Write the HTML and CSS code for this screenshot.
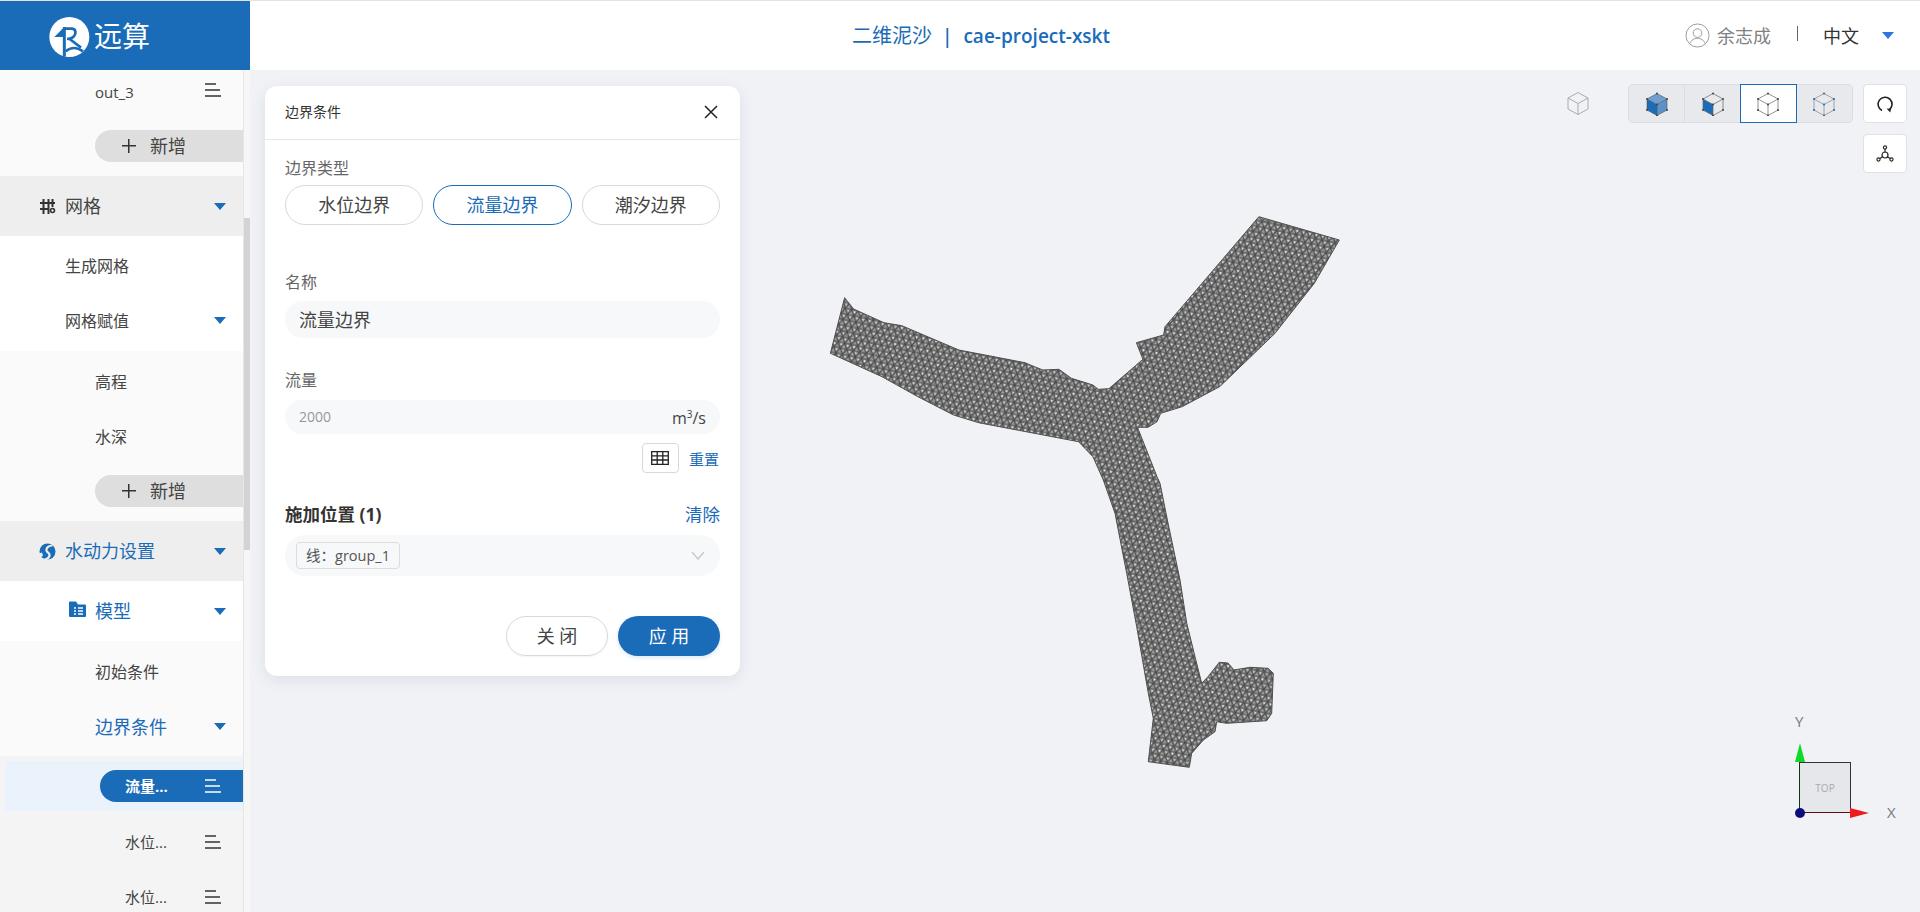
FILE: index.html
```html
<!DOCTYPE html>
<html lang="zh-CN">
<head>
<meta charset="utf-8">
<title>二维泥沙 | cae-project-xskt</title>
<link rel="stylesheet" href="styles.css">
</head>
<body>
<svg class="defs" width="0" height="0" aria-hidden="true">
  <defs>
    <symbol id="lines" viewBox="0 0 16 14"><path d="M0 1h11M0 7h15M0 13h16" stroke="currentColor" stroke-width="1.4" fill="none"/></symbol>
    <symbol id="cube-dots" viewBox="0 0 24 24"><path d="M12 1.500h.01M22 7h.01M22 18h.01M12 23.500h.01M2 18h.01M2 7h.01M12 12.500h.01" stroke="#444" stroke-width="2" stroke-linecap="round"/></symbol>
    <pattern id="mesh" width="6.600" height="11.430" patternUnits="userSpaceOnUse" patternTransform="rotate(12)">
      <rect width="6.600" height="11.430" fill="#a0a0a0"/>
      <path d="M0 0H6.600M0 5.715H6.600M0 11.430H6.600M0 0L3.300 5.715L6.600 0M0 11.430L3.300 5.715L6.600 11.430" stroke="#4c4c4c" stroke-width="1.150" fill="none"/>
      <circle cx="3.300" cy="1.900" r=".85" fill="#f6f7f9"/>
      <circle cx="0" cy="7.600" r=".85" fill="#f0f1f3"/>
      <circle cx="6.600" cy="7.600" r=".85" fill="#f0f1f3"/>
    </pattern>
    <pattern id="mesh-over" width="7.400" height="12.800" patternUnits="userSpaceOnUse" patternTransform="rotate(47)">
      <path d="M0 0H7.400M0 6.400H7.400M0 0L3.700 6.400L7.400 0M0 12.800L3.700 6.400L7.400 12.800" stroke="#444" stroke-width="1" fill="none"/>
    </pattern>
  </defs>
</svg>
<header class="topbar">
  <div class="brand">
    <svg class="brand-mark" viewBox="0 0 150 150" aria-hidden="true">
      <circle cx="73" cy="78" r="60" fill="#fff"/>
      <path d="M28 78L58 48V78z" fill="#1a6bb8"/>
      <path d="M58 48V137" stroke="#1a6bb8" stroke-width="9" fill="none"/>
      <path d="M58 53H82Q93 55 91 68Q86 84 66 84" stroke="#1a6bb8" stroke-width="8" fill="none"/>
      <path d="M74 84L108 110" stroke="#1a6bb8" stroke-width="8" fill="none"/>
      <path d="M62 121Q86 101 114 121" stroke="#1a6bb8" stroke-width="8" fill="none"/>
    </svg>
    <span class="brand-name">远算</span>
  </div>
  <div class="project"><span class="project-type">二维泥沙</span><span class="project-sep">|</span><span class="project-name">cae-project-xskt</span></div>
  <div class="account">
    <svg class="avatar" viewBox="0 0 26 26" aria-hidden="true"><circle cx="13" cy="13" r="12" fill="none" stroke="#999" stroke-width="1"/><circle cx="13" cy="10.5" r="4.5" fill="none" stroke="#999" stroke-width="1"/><path d="M5 21.5c1.500-4 4.500-5.500 8-5.500s6.500 1.500 8 5.500" fill="none" stroke="#999" stroke-width="1"/></svg>
    <span class="user-name">余志成</span>
    <span class="account-sep"></span>
    <span class="lang">中文</span>
    <span class="caret caret-lang"></span>
  </div>
</header>
<div class="workspace">
  <aside class="sidebar">
    <nav class="tree">
      <div class="block block-soft">
        <div class="row row-top row-l2"><span class="row-label out">out_3</span><svg class="row-lines row-lines-top"><use href="#lines"/></svg></div>
        <div class="add-wrap add-wrap-top"><button class="add-btn"><span class="plus"></span>新增</button></div>
      </div>
      <div class="section"><svg class="section-icon" viewBox="0 0 17 17" aria-hidden="true"><path d="M4.500 1v15M9.500 1v15M1 5h15M1 11h9" stroke="#333" stroke-width="2" fill="none"/><circle cx="13.500" cy="12.500" r="2" fill="none" stroke="#333" stroke-width="1.600"/><path d="M13.500 1v8" stroke="#333" stroke-width="2"/></svg><span class="section-label">网格</span><span class="caret"></span></div>
      <div class="block block-white block-mesh">
        <div class="row row-l1"><span class="row-label">生成网格</span></div>
        <div class="row row-l1"><span class="row-label">网格赋值</span><span class="caret"></span></div>
      </div>
      <div class="block block-soft block-assign">
        <div class="row row-l2"><span class="row-label">高程</span></div>
        <div class="row row-l2"><span class="row-label">水深</span></div>
        <div class="add-wrap add-wrap-mid"><button class="add-btn"><span class="plus"></span>新增</button></div>
      </div>
      <div class="section"><svg class="section-icon" viewBox="0 0 17 17" aria-hidden="true"><circle cx="8.500" cy="8.500" r="8" fill="#1a6bb8"/><path d="M13.500 2.500C10 2.500 7 4.500 7.500 7.500C8 10 11 9.500 10.500 12.500C10.200 14.500 8 16 5.500 16.500" stroke="#eee" stroke-width="2.200" fill="none"/><path d="M0 10.500L3 9.500L4 13L1.500 14z" fill="#eee"/></svg><span class="section-label section-label-on">水动力设置</span><span class="caret"></span></div>
      <div class="model-row"><svg class="model-icon" viewBox="0 0 17 16" aria-hidden="true"><path d="M0 1.500A1 1 0 0 1 1 .5h6l2 3h7a1 1 0 0 1 1 1V15a1 1 0 0 1-1 1H1a1 1 0 0 1-1-1z" fill="#1a6bb8"/><path d="M5 7h2M5 10h2M5 13h2M9 7h5M9 10h5M9 13h5" stroke="#fff" stroke-width="1.300"/></svg><span class="row-label row-label-on">模型</span><span class="caret"></span></div>
      <div class="block block-soft block-model">
        <div class="row row-l2"><span class="row-label">初始条件</span></div>
        <div class="row row-l2"><span class="row-label row-label-on">边界条件</span><span class="caret"></span></div>
      </div>
      <div class="block block-leaf">
        <div class="leaf-active"><div class="leaf-pill"><span class="leaf-label-on">流量...</span><svg class="row-lines row-lines-on"><use href="#lines"/></svg></div></div>
        <div class="row row-l3"><span class="leaf-label">水位...</span><svg class="row-lines"><use href="#lines"/></svg></div>
        <div class="row row-l3"><span class="leaf-label">水位...</span><svg class="row-lines"><use href="#lines"/></svg></div>
      </div>
    </nav>
    <div class="scrolltrack"><div class="scrollthumb"></div></div>
  </aside>
  <main class="stage">
    <svg class="mesh" viewBox="250 70 1670 842" aria-label="二维网格">
      <defs><path id="river" d="M844.600 297.700L853.600 309L883.900 322.700L901.800 325.700L958.900 350L1025 362.700L1032 365.700L1042.900 370L1058.900 369.300L1071.400 378.300L1092.900 385L1098.200 389.300L1108.900 388.700L1142.900 359.300L1136.400 342.700L1163.600 335L1165 326.700L1258.900 216.700L1339.300 240L1314.300 283.300L1275 333.300L1219.600 386.700L1182.100 406.700L1160.700 413.300L1157 421.700L1148 427.300L1137.500 427.300L1157 476.700L1160 483.300L1168 523L1180 580L1186.700 623L1195 656.700L1201.700 683.300L1208 676.700L1219.300 662.300L1228 663L1234 670L1250 667.300L1268 668.300L1273.300 673.300L1271.700 713.300L1266.700 720.700L1226.700 723.300L1216.700 721.700L1215 731.700L1203.300 740L1191.700 753.300L1189.300 767.300L1148.300 761.700L1153.300 718.300L1148.300 693.300L1136.700 626.700L1126.700 573.300L1115 513.300L1103.300 480L1092.900 456.700L1078.600 441.700L978.600 422.700L953.600 415L917.900 396.700L882 376.700L830.400 353.300Z"/></defs>
      <use href="#river" class="mesh-shape"/>
      <use href="#river" class="mesh-over"/>
    </svg>

    <section class="panel">
      <div class="panel-head"><span class="panel-title">边界条件</span><svg class="panel-close" viewBox="0 0 14 14" aria-hidden="true"><path d="M1 1l12 12M13 1L1 13" stroke="#222" stroke-width="1.500" fill="none"/></svg></div>
      <div class="panel-body">
        <div class="field-label">边界类型</div>
        <div class="segments">
          <button class="segment">水位边界</button>
          <button class="segment segment-on">流量边界</button>
          <button class="segment">潮汐边界</button>
        </div>
        <div class="field-label field-label-name">名称</div>
        <div class="input input-name">流量边界</div>
        <div class="field-label field-label-flow">流量</div>
        <div class="input input-flow"><span class="placeholder">2000</span><span class="unit">m<sup>3</sup>/s</span></div>
        <div class="tools">
          <button class="table-btn"><svg viewBox="0 0 18 14" aria-hidden="true"><path d="M.7.7h16.600v12.600H.7zM.7 4.800h16.600M.7 9h16.600M6.200.7v12.600M11.800.7v12.600" stroke="#222" stroke-width="1.300" fill="none"/></svg></button>
          <a class="link-reset">重置</a>
        </div>
        <div class="apply-head"><span class="apply-title">施加位置 (1)</span><a class="link-clear">清除</a></div>
        <div class="select"><span class="tag">线：group_1</span><svg class="chevron" viewBox="0 0 14 9" aria-hidden="true"><path d="M1 1l6 7 6-7" stroke="#c4c6cc" stroke-width="1.200" fill="none"/></svg></div>
        <div class="actions"><button class="btn btn-plain">关 闭</button><button class="btn btn-primary">应 用</button></div>
      </div>
    </section>

    <div class="viewtools">
      <svg class="cube cube-solo" viewBox="0 0 24 24" aria-hidden="true"><path d="M12 1.500L22 7v11l-10 5.500L2 18V7zM2 7l10 5.500L22 7M12 12.500v11" fill="none" stroke="#a9abb0" stroke-width="1"/></svg>
      <div class="view-group">
        <button class="view-btn"><svg class="cube" viewBox="0 0 24 24" aria-hidden="true"><path d="M12 1.500L22 7l-10 5.500L2 7z" fill="#6f9fce"/><path d="M2 7l10 5.500v11L2 18z" fill="#1a6bb8"/><path d="M22 7l-10 5.500v11L22 18z" fill="#5b93c9"/><path d="M12 1.500L22 7v11l-10 5.500L2 18V7zM2 7l10 5.500L22 7M12 12.500v11" fill="none" stroke="#555" stroke-width=".6"/><use href="#cube-dots"/></svg></button>
        <button class="view-btn"><svg class="cube" viewBox="0 0 24 24" aria-hidden="true"><path d="M2 7l10 5.500v11L2 18z" fill="#1a6bb8"/><path d="M12 1.500L22 7v11l-10 5.500L2 18V7zM2 7l10 5.500L22 7M12 12.500v11" fill="none" stroke="#666" stroke-width=".7"/><use href="#cube-dots"/></svg></button>
        <button class="view-btn view-btn-on"><svg class="cube" viewBox="0 0 24 24" aria-hidden="true"><path d="M12 1.500L22 7v11l-10 5.500L2 18V7zM2 7l10 5.500L22 7M12 12.500v11" fill="none" stroke="#777" stroke-width=".8"/><use href="#cube-dots"/></svg></button>
        <button class="view-btn"><svg class="cube" viewBox="0 0 24 24" aria-hidden="true"><path d="M12 1.500L22 7v11l-10 5.500L2 18V7zM2 7l10 5.500L22 7M12 12.500v11" fill="none" stroke="#8d8f95" stroke-width=".8"/><path d="M12 1.500h.01M22 7h.01M22 18h.01M12 23.500h.01M2 18h.01M2 7h.01M12 12.500h.01" stroke="#1a6bb8" stroke-width="2" stroke-linecap="round"/></svg></button>
      </div>
      <div class="side-tools">
        <button class="tool-btn"><svg viewBox="0 0 18 18" aria-hidden="true"><path d="M6 15.500A7 7 0 1 1 13 15" fill="none" stroke="#222" stroke-width="1.600"/><path d="M10.500 13.500l4.500.5-.8 3.500z" fill="#222"/></svg></button>
        <button class="tool-btn"><svg viewBox="0 0 18 18" aria-hidden="true"><circle cx="9" cy="10" r="3" fill="none" stroke="#222" stroke-width="1.200"/><circle cx="9" cy="2.500" r="1.600" fill="none" stroke="#222" stroke-width="1.100"/><circle cx="2.500" cy="14.500" r="1.600" fill="none" stroke="#222" stroke-width="1.100"/><circle cx="15.500" cy="14.500" r="1.600" fill="none" stroke="#222" stroke-width="1.100"/><path d="M9 4v3.500M4 13.500l2.500-1.800M14 13.500l-2.500-1.800" stroke="#222" stroke-width="1.100"/></svg></button>
      </div>
    </div>

    <div class="axes">
      <span class="axis-y">Y</span>
      <span class="axis-x">X</span>
      <div class="view-face">TOP</div>
      <svg class="axes-art" viewBox="0 0 90 90" aria-hidden="true">
        <path d="M10 0L5 19h10z" fill="#10d82a"/>
        <path d="M60 65l19 5-19 5z" fill="#ee1c1c"/>
        <circle cx="10" cy="70" r="5" fill="#0c0c7c"/>
      </svg>
    </div>
  </main>
</div>
</body>
</html>
```
FILE: styles.css
```css
* { box-sizing: border-box; }
html, body { margin: 0; height: 912px; overflow: hidden; }
body {
  font-family: "Open Sans", "Noto Sans CJK SC", sans-serif;
  color: #333;
  background: #f0f2f6;
  display: flex;
  flex-direction: column;
}
button { font: inherit; color: inherit; background: none; border: 0; padding: 0; }
.defs { position: absolute; }

/* top bar */
.topbar {
  flex: none;
  height: 70px;
  display: flex;
  align-items: center;
  position: relative;
  background: #fff;
  border-top: 1px solid #e4e4e4;
}
.brand {
  width: 250px;
  height: 69px;
  background: #1a6bb8;
  display: flex;
  align-items: center;
  padding-left: 45px;
}
.brand-mark { width: 50px; height: 50px; flex: none; }
.brand-name { color: #fff; font-size: 28px; line-height: 40px; margin-left: -1px; }
.project {
  flex: 1;
  display: flex;
  align-items: center;
  justify-content: center;
  color: #1a6bb8;
  font-size: 18px;
  line-height: 26px;
  padding-left: 27px;
}
.project-type { font-size: 20px; }
.project-sep { margin: 0 11px 0 10px; font-weight: 600; font-size: 19px; }
.project-name { font-weight: 600; font-size: 19px; }
.account { display: flex; align-items: center; padding-right: 26px; }
.avatar { width: 25px; height: 25px; }
.user-name { color: #808080; font-size: 18px; line-height: 24px; margin-left: 7px; }
.account-sep { width: 1px; height: 15px; background: #666; margin: -4px 25px 0 26px; }
.lang { color: #333; font-size: 18px; line-height: 24px; }
.caret-lang { margin-left: 23px; border-top-color: #2f76dc !important; }

.caret {
  width: 0;
  height: 0;
  border-left: 6px solid transparent;
  border-right: 6px solid transparent;
  border-top: 7px solid #1a6bb8;
}

/* layout */
.workspace { flex: 1; min-height: 0; display: flex; }

/* sidebar */
.sidebar { width: 250px; flex: none; display: flex; overflow: hidden; background: #fafafa; }
.tree { width: 243px; flex: none; overflow: hidden; }
.scrolltrack { width: 7px; background: #f6f6f6; border-left: 1px solid #e6e6e6; }
.scrollthumb { height: 332px; margin-top: 148px; background: #d3d3d3; }
.block-soft { background: #fafafa; }
.block-white { background: #fff; }
.block-mesh { padding: 3px 0 2px; }
.block-assign { padding-top: 4px; padding-bottom: 14px; }
.block-model { padding: 4px 0 1px; }
.block-leaf { background: #f4f4f4; padding-top: 5px; }
.section {
  height: 60px;
  background: #eeeeee;
  display: flex;
  align-items: center;
  padding: 0 17px 0 39px;
}
.section-icon { width: 17px; height: 17px; flex: none; margin-right: 9px; }
.section-label { flex: 1; font-size: 18px; line-height: 24px; color: #444; }
.section-label-on { color: #1a6bb8; }
.row {
  height: 55px;
  display: flex;
  align-items: center;
  padding-right: 17px;
  padding-bottom: 2px;
}
.row-top { height: 45px; padding-right: 22px; }
.row-l1 { padding-left: 65px; }
.row-l2 { padding-left: 95px; }
.row-l3 { padding-left: 125px; padding-right: 22px; padding-bottom: 0; }
.row-label { flex: 1; font-size: 16px; line-height: 24px; color: #444; }
.row-label.out { font-size: 15px; }
.row-label-on { color: #1a6bb8; font-size: 18px; }
.row-lines { width: 16px; height: 14px; color: #333; flex: none; }
.row-lines-top { margin-top: -4px; }
.row-lines-on { color: #fff; }
.add-wrap { padding-left: 95px; }
.add-wrap-top { padding-top: 15px; padding-bottom: 14px; }
.add-wrap-mid { padding-top: 10px; }
.add-btn {
  width: 100%;
  height: 32px;
  display: flex;
  align-items: center;
  background: #dedede;
  border-radius: 16px 0 0 16px;
  font-size: 18px;
  line-height: 24px;
  color: #444;
  padding-left: 27px;
}
.plus {
  width: 14px;
  height: 14px;
  margin-right: 14px;
  background:
    linear-gradient(#333, #333) center / 100% 1.500px no-repeat,
    linear-gradient(#333, #333) center / 1.500px 100% no-repeat;
}
.model-row {
  height: 60px;
  background: #fff;
  display: flex;
  align-items: center;
  padding: 0 17px 0 69px;
}
.model-icon { width: 17px; height: 16px; margin-right: 9px; margin-top: -4px; flex: none; }
.leaf-active {
  height: 50px;
  margin: 0 0 3.500px 5px;
  padding: 9px 0 9px 95px;
  background: #eaf3fb;
}
.leaf-pill {
  height: 32px;
  background: #1a6bb8;
  border-radius: 16px 0 0 16px;
  display: flex;
  align-items: center;
  padding: 0 22px 0 25px;
}
.leaf-label-on { flex: 1; color: #fff; font-size: 15px; font-weight: 700; line-height: 20px; }
.leaf-label { flex: 1; font-size: 15px; line-height: 20px; color: #444; }

/* canvas */
.stage { flex: 1; position: relative; min-width: 0; overflow: hidden; background: #f0f2f6; }
.mesh { position: absolute; inset: 0; width: 100%; height: 100%; }
.mesh-shape { fill: url(#mesh); stroke: #4f4f4f; stroke-width: 1; stroke-linejoin: round; }
.mesh-over { fill: url(#mesh-over); opacity: .3; }

/* boundary panel */
.panel {
  position: absolute;
  left: 15px;
  top: 16px;
  width: 475px;
  height: 590px;
  background: #fff;
  border-radius: 12px;
  box-shadow: 0 4px 14px rgba(120, 130, 150, .16);
}
.panel-head {
  height: 54px;
  display: flex;
  align-items: center;
  justify-content: space-between;
  padding: 0 22px 1px 20px;
  border-bottom: 1px solid #e6e6e6;
}
.panel-title { font-size: 14px; line-height: 20px; color: #333; }
.panel-close { width: 14px; height: 14px; }
.panel-body { padding: 18px 20px 0; }
.field-label { font-size: 16px; line-height: 20px; height: 20px; color: #666; }
.segments { display: flex; gap: 10px; margin-top: 7px; }
.segment {
  flex: 1;
  height: 40px;
  border: 1px solid #d9d9d9;
  border-radius: 20px;
  font-size: 18px;
  line-height: 24px;
  color: #444;
}
.segment-on { border-color: #1a6bb8; color: #1a6bb8; }
.field-label-name { margin-top: 47px; }
.input {
  background: #f7f8fa;
  display: flex;
  align-items: center;
  justify-content: space-between;
  padding: 0 14px;
  color: #444;
}
.input-name { height: 37px; margin-top: 9px; padding-top: 1px; border-radius: 18px; font-size: 18px; line-height: 24px; }
.field-label-flow { margin-top: 32px; }
.input-flow { height: 34px; margin-top: 10px; border-radius: 17px; }
.placeholder { color: #999; font-size: 14px; line-height: 20px; }
.unit { font-size: 16px; line-height: 20px; color: #444; padding-top: 2px; }
.unit sup { font-size: 10px; line-height: 0; }
.tools { display: flex; justify-content: flex-end; align-items: center; gap: 10px; margin-top: 9px; padding-right: 1px; }
.table-btn {
  width: 37px;
  height: 30px;
  border: 1px solid #d9d9d9;
  border-radius: 4px;
  display: flex;
  align-items: center;
  justify-content: center;
}
.table-btn svg { width: 18px; height: 14px; }
.link-reset { color: #1a6bb8; font-size: 15px; line-height: 20px; padding-top: 2px; }
.apply-head { display: flex; justify-content: space-between; align-items: center; margin-top: 27px; height: 28px; }
.apply-title { font-size: 17.500px; line-height: 24px; font-weight: 700; color: #333; }
.link-clear { color: #1a6bb8; font-size: 17.500px; line-height: 24px; }
.select {
  height: 41px;
  margin-top: 7px;
  background: #f7f8fa;
  border-radius: 20px;
  display: flex;
  align-items: center;
  justify-content: space-between;
  padding: 0 15px 0 11px;
}
.tag {
  height: 27px;
  width: 104px;
  border: 1px solid #dcdcdc;
  border-radius: 4px;
  font-size: 14.500px;
  line-height: 25px;
  text-align: center;
  color: #555;
  white-space: nowrap;
}
.chevron { width: 14px; height: 9px; }
.actions { display: flex; justify-content: flex-end; gap: 10px; margin-top: 40px; }
.btn { width: 102px; height: 40px; border-radius: 20px; font-size: 18px; line-height: 26px; }
.btn-plain { border: 1px solid #d9d9d9; color: #444; box-shadow: 0 1px 2px rgba(0,0,0,.05); }
.btn-primary { background: #1a6bb8; color: #fff; box-shadow: 0 2px 4px rgba(26,107,184,.15); }

/* view tools */
.viewtools {
  position: absolute;
  top: 14px;
  right: 13px;
  display: flex;
  align-items: flex-start;
}
.cube { width: 24px; height: 24px; display: block; }
.cube-solo { margin: 7px 38px 0 0; }
.view-group {
  display: flex;
  width: 225px;
  height: 39px;
  background: #e8e9ec;
  border: 1px solid #dcdde0;
  border-radius: 5px;
}
.view-btn {
  flex: 1;
  display: flex;
  align-items: center;
  justify-content: center;
  border-left: 1px solid #dcdde0;
}
.view-btn:first-child { border-left: 0; }
.view-btn-on { background: #fff; box-shadow: 0 0 0 1px #1a6bb8; border-left: 0; position: relative; }
.side-tools { display: flex; flex-direction: column; gap: 11px; margin-left: 10px; }
.tool-btn {
  width: 44px;
  height: 39px;
  background: #fff;
  border: 1px solid #e0e1e4;
  border-radius: 4px;
  display: flex;
  align-items: center;
  justify-content: center;
}
.tool-btn svg { width: 18px; height: 18px; }

/* axis gizmo */
.axes { position: absolute; left: 1540px; top: 642px; width: 120px; height: 120px; color: #777; font-size: 15px; line-height: 18px; }
.axis-y { position: absolute; left: 5px; top: 0; }
.axis-x { position: absolute; left: 97px; top: 91px; }
.axes-art { position: absolute; left: 0; top: 31px; width: 90px; height: 90px; }
.view-face {
  position: absolute;
  left: 9px;
  top: 50px;
  width: 52px;
  height: 51px;
  display: flex;
  align-items: center;
  justify-content: center;
  background: #e6e7ea;
  border: 1px solid #333;
  border-left-color: #0c3a10;
  border-bottom-color: #5c0c0c;
  color: #aaa;
  font-size: 10px;
}
```
